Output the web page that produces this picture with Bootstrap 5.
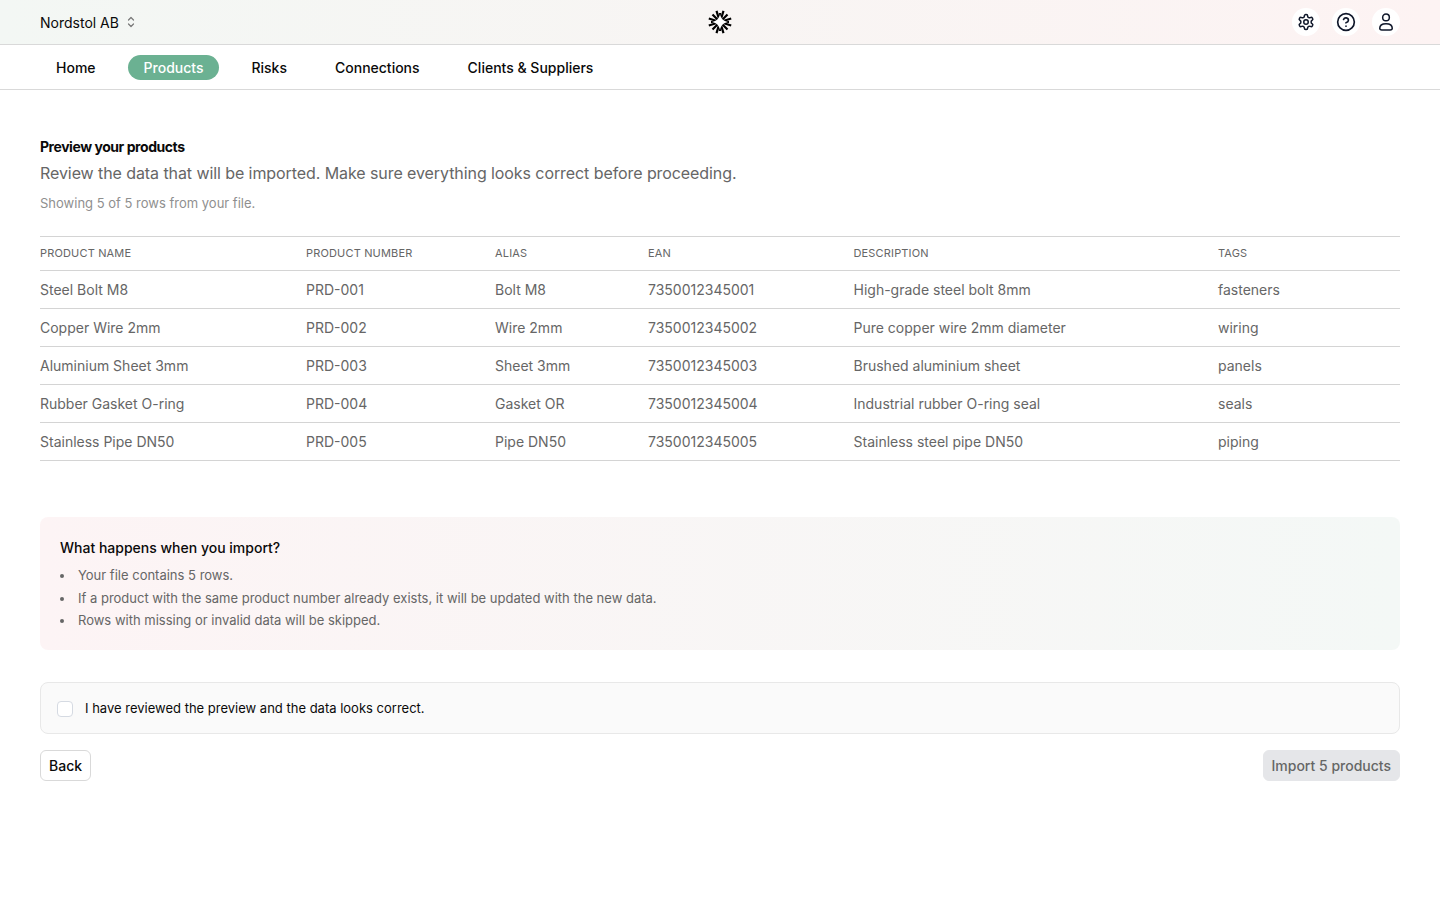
<!DOCTYPE html>
<html lang="en">
<head>
  <meta charset="UTF-8" />
  <title>Preview your products</title>
  <meta name="viewport" content="width=device-width, initial-scale=1" />
  <link href="https://cdn.jsdelivr.net/npm/bootstrap@5.3.0/dist/css/bootstrap.min.css" rel="stylesheet" />
  <style>
    body {
      font-family: "Inter", "Liberation Sans", sans-serif;
      font-size: 14px;
      color: #0a0a0a;
      background: #fff;
    }
    .top-strip {
      height: 45px;
      padding: 0 40px;
      background: linear-gradient(90deg, #f3f7f4, #fdf3f3);
      border-bottom: 1px solid #d9d9d9;
    }
    .top-side { width: 400px; }
    .icon-group { gap: 12px; }
    .org-name { font-size: 14px; margin-right: 3px; }
    .round-btn {
      width: 28px;
      height: 28px;
      background: #fff;
      border-radius: 50%;
    }
    .main-tabs {
      height: 45px;
      padding: 0 40px;
      border-bottom: 1px solid #d9d9d9;
      gap: 16px;
    }
    .main-tabs .nav-link {
      color: #0a0a0a;
      font-size: 14px;
      font-weight: 500;
      line-height: 25px;
      padding: 0 16px;
      border-radius: 13px;
    }
    .main-tabs .nav-link.active {
      background: #6bb192;
      color: #fff;
    }
    .page-body { padding: 47px 40px 0; }
    .page-title { font-size: 14px; font-weight: 700; line-height: 20px; margin: 0 0 4px; letter-spacing: -.45px; }
    .page-sub { font-size: 16px; line-height: 24px; color: #666; margin: 0 0 8px; letter-spacing: -.08px; }
    .page-note { font-size: 13px; line-height: 20px; color: #8f8f8f; margin: 0 0 23px; }
    .prod-table { margin-bottom: 56px; table-layout: fixed; border-top: 1px solid #d4d4d4; }
    .prod-table th, .prod-table td {
      padding: 0;
      border-bottom: 1px solid #d4d4d4;
      vertical-align: middle;
      box-shadow: none;
    }
    .prod-table th {
      height: 34px;
      font-size: 11px;
      font-weight: 400;
      letter-spacing: .16px;
      text-transform: uppercase;
      color: #666;
    }
    .prod-table td { height: 38px; font-size: 14px; color: #666; }
    .info-box {
      padding: 20px;
      height: 133px;
      border-radius: 8px;
      background: linear-gradient(90deg, #fdf4f5, #f4f8f6);
      margin-bottom: 32px;
    }
    .info-box h6 { font-size: 14px; font-weight: 500; line-height: 22px; margin: 0 0 5px; }
    .info-box ul { font-size: 13px; color: #666; padding-left: 18px; margin: 0; list-style: none; }
    .info-box li { line-height: 22.5px; }
    .info-box li::before {
      content: "";
      display: inline-block;
      width: 4px;
      height: 4px;
      margin: 0 14px 2px -18px;
      background: #666;
      border-radius: 50%;
    }
    .confirm-box {
      height: 52px;
      padding: 0 16px;
      background: #fafafa;
      border: 1px solid #e8e8e8;
      border-radius: 8px;
      margin-bottom: 16px;
      font-size: 13px;
    }
    .confirm-box .form-check-input {
      width: 16px;
      height: 16px;
      margin: 1px 12px 0 0;
      border-color: #d5dae2;
      border-radius: 4px;
      flex: none;
    }
    .confirm-box span { padding-top: 2px; }
    .back-btn, .import-btn {
      height: 31px;
      padding: 0 8px;
      font-size: 14px;
      font-weight: 500;
      line-height: 29px;
      border-radius: 6px;
    }
    .back-btn { background: #fff; border: 1px solid #d9d9d9; color: #0a0a0a; }
    .import-btn, .import-btn:disabled { background: #e5e6e9; border: 1px solid #e5e6e9; color: #666; opacity: 1; }
  </style>
</head>
<body>

  <header class="top-strip d-flex align-items-center justify-content-between">
    <div class="top-side d-flex align-items-center gap-1">
      <span class="org-name">Nordstol AB</span>
      <svg width="10" height="14" viewBox="0 0 10 14" fill="none" stroke="#777" stroke-width="1.2" stroke-linecap="round" stroke-linejoin="round"><path d="M2.5 5 5 2.5 7.5 5M2.5 9 5 11.5 7.5 9"/></svg>
    </div>
    <svg width="26" height="26" viewBox="0 0 26 26" fill="none">
      <g stroke="#000" stroke-width="2.200">
        <path d="M13 4v18M4 13h18"/>
        <path d="M9.500 1.800 13 13 16.500 1.800M9.500 24.200 13 13 16.500 24.200"/>
        <path d="M1.800 9.500 13 13 1.800 16.500M24.200 9.500 13 13 24.200 16.500"/>
        <path d="M5.500 5.500 20.500 20.500M20.500 5.500 5.500 20.500"/>
      </g>
      <path d="M13 5c1 4.700 3.300 7 8 8-4.700 1-7 3.300-8 8-1-4.700-3.300-7-8-8 4.700-1 7-3.300 8-8z" fill="#fff"/>
    </svg>
    <div class="top-side icon-group d-flex align-items-center justify-content-end">
      <button class="round-btn btn p-0 border-0 d-flex align-items-center justify-content-center" aria-label="Settings">
        <svg width="18" height="18" viewBox="0 0 24 24" fill="none" stroke="#0f172a" stroke-width="2" stroke-linecap="round" stroke-linejoin="round"><path d="M12.220 2h-.44a2 2 0 0 0-2 2v.18a2 2 0 0 1-1 1.730l-.43.25a2 2 0 0 1-2 0l-.15-.08a2 2 0 0 0-2.730.73l-.22.38a2 2 0 0 0 .73 2.730l.15.1a2 2 0 0 1 1 1.720v.51a2 2 0 0 1-1 1.740l-.15.09a2 2 0 0 0-.73 2.730l.22.38a2 2 0 0 0 2.730.73l.15-.08a2 2 0 0 1 2 0l.43.25a2 2 0 0 1 1 1.730V20a2 2 0 0 0 2 2h.44a2 2 0 0 0 2-2v-.18a2 2 0 0 1 1-1.730l.43-.25a2 2 0 0 1 2 0l.15.08a2 2 0 0 0 2.730-.73l.22-.39a2 2 0 0 0-.73-2.730l-.15-.08a2 2 0 0 1-1-1.740v-.5a2 2 0 0 1 1-1.740l.15-.09a2 2 0 0 0 .73-2.730l-.22-.38a2 2 0 0 0-2.730-.73l-.15.08a2 2 0 0 1-2 0l-.43-.25a2 2 0 0 1-1-1.730V4a2 2 0 0 0-2-2z"/><circle cx="12" cy="12" r="3"/></svg>
      </button>
      <button class="round-btn btn p-0 border-0 d-flex align-items-center justify-content-center" aria-label="Help">
        <svg width="20" height="20" viewBox="0 0 24 24" fill="none" stroke="#0f172a" stroke-width="2" stroke-linecap="round" stroke-linejoin="round"><circle cx="12" cy="12" r="10"/><path d="M9.090 9a3 3 0 0 1 5.830 1c0 2-3 3-3 3"/><path d="M12 17h.01"/></svg>
      </button>
      <button class="round-btn btn p-0 border-0 d-flex align-items-center justify-content-center" aria-label="Account">
        <svg width="20" height="20" viewBox="0 0 24 24" fill="none" stroke="#0f172a" stroke-width="1.800" stroke-linecap="round" stroke-linejoin="round"><circle cx="12" cy="6.500" r="4"/><path d="M4.500 19.500c0-3.500 3-5.500 7.500-5.500s7.500 2 7.500 5.500c0 1.200-1 2-2.500 2H7c-1.500 0-2.500-.8-2.500-2z"/></svg>
      </button>
    </div>
  </header>

  <nav class="main-tabs nav align-items-center">
    <a class="nav-link" href="#">Home</a>
    <a class="nav-link active" href="#">Products</a>
    <a class="nav-link" href="#">Risks</a>
    <a class="nav-link" href="#">Connections</a>
    <a class="nav-link" href="#">Clients &amp; Suppliers</a>
  </nav>

  <main class="page-body">
    <h1 class="page-title">Preview your products</h1>
    <p class="page-sub">Review the data that will be imported. Make sure everything looks correct before proceeding.</p>
    <p class="page-note">Showing 5 of 5 rows from your file.</p>

    <table class="table prod-table">
      <colgroup>
        <col style="width:266px" /><col style="width:189px" /><col style="width:153px" /><col style="width:205.500px" /><col style="width:364.500px" /><col />
      </colgroup>
      <thead>
        <tr><th>Product name</th><th>Product number</th><th>Alias</th><th>EAN</th><th>Description</th><th>Tags</th></tr>
      </thead>
      <tbody id="prodRows"></tbody>
    </table>

    <section class="info-box">
      <h6>What happens when you import?</h6>
      <ul>
        <li>Your file contains 5 rows.</li>
        <li>If a product with the same product number already exists, it will be updated with the new data.</li>
        <li>Rows with missing or invalid data will be skipped.</li>
      </ul>
    </section>

    <label class="confirm-box d-flex align-items-center">
      <input class="form-check-input" type="checkbox" />
      <span>I have reviewed the preview and the data looks correct.</span>
    </label>

    <div class="d-flex justify-content-between">
      <button class="btn back-btn">Back</button>
      <button class="btn import-btn" disabled>Import 5 products</button>
    </div>
  </main>

  <script>
    const products = [
      ["Steel Bolt M8", "PRD-001", "Bolt M8", "7350012345001", "High-grade steel bolt 8mm", "fasteners"],
      ["Copper Wire 2mm", "PRD-002", "Wire 2mm", "7350012345002", "Pure copper wire 2mm diameter", "wiring"],
      ["Aluminium Sheet 3mm", "PRD-003", "Sheet 3mm", "7350012345003", "Brushed aluminium sheet", "panels"],
      ["Rubber Gasket O-ring", "PRD-004", "Gasket OR", "7350012345004", "Industrial rubber O-ring seal", "seals"],
      ["Stainless Pipe DN50", "PRD-005", "Pipe DN50", "7350012345005", "Stainless steel pipe DN50", "piping"]
    ];
    document.getElementById("prodRows").innerHTML = products
      .map(p => `<tr>${p.map(v => `<td>${v}</td>`).join("")}</tr>`)
      .join("");
  </script>
  <script src="https://cdn.jsdelivr.net/npm/bootstrap@5.3.0/dist/js/bootstrap.bundle.min.js"></script>
</body>
</html>
